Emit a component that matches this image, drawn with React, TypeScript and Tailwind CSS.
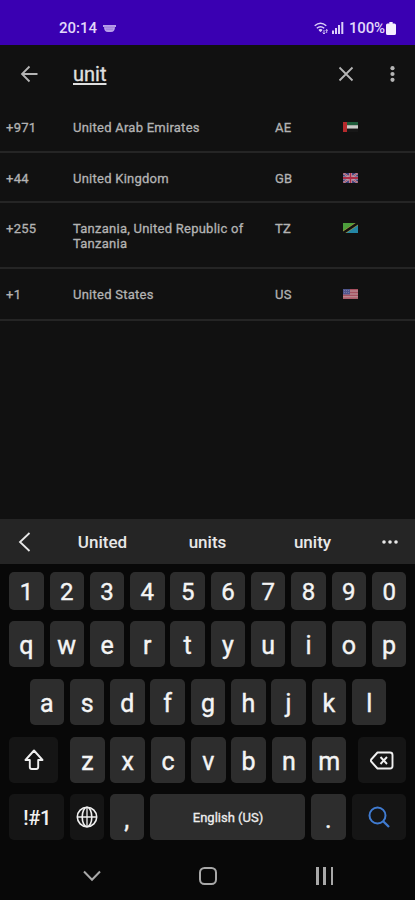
import React from "react";

type FlagCode = "AE" | "GB" | "TZ" | "US";

const countries: { dial: string; name: string; code: FlagCode; height: string }[] = [
  { dial: "+971", name: "United Arab Emirates", code: "AE", height: "h-[51px]" },
  { dial: "+44", name: "United Kingdom", code: "GB", height: "h-[50px]" },
  { dial: "+255", name: "Tanzania, United Republic of Tanzania", code: "TZ", height: "h-[66px]" },
  { dial: "+1", name: "United States", code: "US", height: "h-[52px]" },
];

function Flag({ code }: { code: FlagCode }) {
  return (
    <svg className="mt-[5px] h-[10px] w-[15px]" viewBox="0 0 15 10">
      {code === "AE" && (
        <>
          <rect width="15" height="3.4" fill="#1d5c3a" />
          <rect y="3.2" width="15" height="3.6" fill="#c9cbc8" />
          <rect y="6.7" width="15" height="3.3" fill="#171717" />
          <rect width="4" height="10" fill="#b52a2c" />
        </>
      )}
      {code === "GB" && (
        <>
          <rect width="15" height="10" fill="#3a3c78" />
          <path d="M0 0L15 10M15 0L0 10" stroke="#b9a9b5" strokeWidth="2" />
          <path d="M0 0L15 10M15 0L0 10" stroke="#a8324a" strokeWidth=".8" />
          <path d="M7.5 0V10M0 5H15" stroke="#c3b3be" strokeWidth="3.2" />
          <path d="M7.5 0V10M0 5H15" stroke="#ad2b45" strokeWidth="1.8" />
        </>
      )}
      {code === "TZ" && (
        <>
          <path d="M0 0H15L0 10Z" fill="#4c9e3c" />
          <path d="M15 0V10H0Z" fill="#2486a5" />
          <path d="M0 10L15 0" stroke="#a99b3c" strokeWidth="3.6" />
          <path d="M0 10L15 0" stroke="#111" strokeWidth="2.6" />
        </>
      )}
      {code === "US" && (
        <>
          <rect width="15" height="10" fill="#b9868e" />
          <path d="M0 .7H15M0 3.5H15M0 6.3H15M0 9.2H15" stroke="#a5505f" strokeWidth="1.3" />
          <rect width="7" height="5.5" fill="#50558c" />
          <path d="M1 1.5H6M1 3.5H6" stroke="#8f91b4" strokeWidth=".6" strokeDasharray="1 1" />
        </>
      )}
    </svg>
  );
}

function Key({ label, short = false }: { label: string; short?: boolean }) {
  const low = label === "," || label === ".";
  const size = short ? "h-[37.5px] pt-[3px] text-[24px]" : low ? "h-[46px] pt-[6px] text-[25px]" : "h-[46px] pt-[4px] text-[25px]";
  return (
    <div
      className={`flex w-[34.5px] shrink-0 items-center justify-center rounded-[5px] bg-[#2d2d2d] text-[#f4f4f4] [-webkit-text-stroke:0.4px] ${size}`}
    >
      {label}
    </div>
  );
}

function KeyRow({ keys, short = false }: { keys: string; short?: boolean }) {
  return (
    <div className="flex justify-center gap-[5.8px]">
      {keys.split("").map((k) => (
        <Key key={k} label={k} short={short} />
      ))}
    </div>
  );
}

const darkKey = "flex h-[46px] shrink-0 items-center justify-center rounded-[5px] bg-[#151515] text-[#f0f0f0]";

export default function App() {
  return (
    <div className="flex h-[900px] w-[415px] flex-col overflow-hidden bg-[#111111] font-['Roboto',sans-serif]">
      <div className="flex h-[45px] shrink-0 items-center bg-[#3a00b2] pt-[11px] pr-[19px] pl-[59px] text-[15px] font-medium text-[#e2d8fa]">
        <span className="w-[38px]">20:14</span>
        <svg className="ml-[6px] h-[7px] w-[13px]" viewBox="0 0 13 7">
          <path d="M0 0H13V2H12Q12 7 8 7H5Q1 7 1 2H0Z" fill="#b79fe9" />
          <path d="M1 2.2H12M3 4.2H10" stroke="#8b65d5" strokeWidth=".6" />
        </svg>
        <svg className="ml-auto h-[13px] w-[14px]" viewBox="0 0 14 13" fill="none" stroke="#dcd0f8">
          <path d="M.7 3.8Q6.5-1.3 12.3 3.8M2.8 6.3Q6.5 3 10.2 6.3M5 8.4Q6.5 7.2 8 8.4" strokeWidth="1.4" />
          <path d="M5 8L6.5 10L8 8Z" fill="#dcd0f8" strokeWidth=".5" />
          <path d="M10 8V12M8.7 10.6L10 12L11.2 10.6M12.7 11V7.5M11.7 8.7L12.7 7.5L13.7 8.7" strokeWidth=".9" />
        </svg>
        <svg className="ml-[4px] h-[12px] w-[12px]" viewBox="0 0 12 12" fill="#dcd0f8">
          <rect x="0" y="8.5" width="2" height="3.5" />
          <rect x="3" y="6" width="2" height="6" />
          <rect x="6" y="3" width="2" height="9" />
          <rect x="9.3" y="0" width="2" height="12" />
        </svg>
        <span className="ml-[5px] w-[37px] whitespace-nowrap tracking-[-0.2px]">100%</span>
        <svg className="h-[13px] w-[10px]" viewBox="0 0 9 13" preserveAspectRatio="none">
          <path d="M3 0H6V1.5H7.5Q9 1.5 9 3V11.5Q9 13 7.5 13H1.5Q0 13 0 11.5V3Q0 1.5 1.5 1.5H3Z" fill="#f4efff" />
        </svg>
      </div>

      <div className="flex h-[57px] shrink-0 items-center pl-[20px] text-[#b5b5b5]">
        <svg className="h-[18px] w-[18px]" viewBox="0 0 18 18" fill="none" stroke="currentColor" strokeWidth="1.8">
          <path d="M17.5 9H2M9.5 1.5L2 9L9.5 16.5" />
        </svg>
        <span className="ml-[35px] pt-px text-[20px] leading-6 text-[#e0e0e0] underline decoration-[1.5px] underline-offset-[2px] [-webkit-text-stroke:0.3px]">unit</span>
        <svg className="mr-[36px] ml-auto h-[16px] w-[16px]" viewBox="0 0 16 16" fill="none" stroke="currentColor" strokeWidth="1.8">
          <path d="M1.5 1.5L14.5 14.5M14.5 1.5L1.5 14.5" />
        </svg>
        <svg className="mr-[20px] h-[16px] w-[5px]" viewBox="0 0 5 16" fill="currentColor">
          <circle cx="2.5" cy="2.2" r="2.1" />
          <circle cx="2.5" cy="8" r="2.1" />
          <circle cx="2.5" cy="13.8" r="2.1" />
        </svg>
      </div>

      <div className="flex flex-col text-[13px] leading-[15px] tracking-[0.25px] text-[#b3b3b3] [-webkit-text-stroke:0.3px]">
        {countries.map((c) => (
          <div key={c.code} className={`flex shrink-0 items-start border-b-2 border-[#252525] pt-[18px] pl-[6px] ${c.height}`}>
            <span className="w-[67px] shrink-0">{c.dial}</span>
            <span className="w-[202px] shrink-0 pr-[20px]">{c.name}</span>
            <span className="w-[68px] shrink-0">{c.code}</span>
            <div className="-mt-[3px] flex">
              <Flag code={c.code} />
            </div>
          </div>
        ))}
      </div>

      <div className="mt-auto flex h-[381px] shrink-0 flex-col bg-[#080808]">
        <div className="flex h-[45px] shrink-0 items-center bg-[#252525] text-[17px] font-medium text-[#e8e8e8]">
          <svg className="ml-[18px] h-[20px] w-[13px]" viewBox="0 0 13 20" fill="none" stroke="currentColor" strokeWidth="1.8">
            <path d="M11.5 1L2 10L11.5 19" />
          </svg>
          <span className="ml-[19px] w-[105px] pt-[2px] text-center">United</span>
          <span className="w-[105px] pt-[2px] text-center">units</span>
          <span className="w-[105px] pt-[2px] text-center">unity</span>
          <svg className="ml-[17px] h-[4px] w-[16px]" viewBox="0 0 16 4" fill="currentColor">
            <circle cx="2" cy="2" r="1.8" />
            <circle cx="8" cy="2" r="1.8" />
            <circle cx="14" cy="2" r="1.8" />
          </svg>
        </div>

        <div className="flex w-[415px] shrink-0 flex-col pt-[8px]">
          <div className="pl-[0.6px]">
            <KeyRow keys="1234567890" short />
          </div>
          <div className="mt-[11.5px] pl-[0.6px]">
            <KeyRow keys="qwertyuiop" />
          </div>
          <div className="mt-[12px] pl-px">
            <KeyRow keys="asdfghjkl" />
          </div>
          <div className="mt-[12px] flex justify-between pr-[8.7px] pl-[9.3px]">
            <div className={`${darkKey} w-[49px]`}>
              <svg className="h-[22px] w-[20px]" viewBox="0 0 20 22" fill="none" stroke="currentColor" strokeWidth="1.9" strokeLinejoin="round">
                <path d="M10 1.5L1.5 11H5.8V18Q5.8 20 7.8 20H12.2Q14.2 20 14.2 18V11H18.5Z" />
              </svg>
            </div>
            <KeyRow keys="zxcvbnm" />
            <div className={`${darkKey} w-[48px]`}>
              <svg className="h-[19px] w-[24px]" viewBox="0 0 24 19" fill="none" stroke="currentColor" strokeWidth="1.9" strokeLinejoin="round">
                <path d="M7.5 1.5H20Q22.5 1.5 22.5 4V15Q22.5 17.5 20 17.5H7.5L1.2 10.5Q.5 9.5 1.2 8.5Z" />
                <path d="M10.5 6L17 13M17 6L10.5 13" />
              </svg>
            </div>
          </div>
          <div className="mt-[11px] flex justify-center gap-[6px]">
            <div className={`${darkKey} w-[54.5px] pt-[2px] pl-[2px] text-[20px] font-medium tracking-[-0.3px]`}>!#1</div>
            <div className={`${darkKey} w-[34px]`}>
              <svg className="h-[22px] w-[22px]" viewBox="0 0 22 22" fill="none" stroke="currentColor" strokeWidth="1.6">
                <circle cx="11" cy="11" r="9.7" />
                <ellipse cx="11" cy="11" rx="4.8" ry="9.7" />
                <path d="M11 1.3V20.7M1.3 11H20.7" strokeWidth="1.3" />
              </svg>
            </div>
            <Key label="," />
            <div className="flex h-[46px] w-[155px] shrink-0 items-center justify-center rounded-[5px] bg-[#2d2d2d] pt-[2px] pl-px text-[13px] text-[#eeeeee] [-webkit-text-stroke:0.3px]">
              English (US)
            </div>
            <Key label="." />
            <div className={`${darkKey} w-[54.5px]`}>
              <svg className="h-[22px] w-[22px]" viewBox="0 0 22 22" fill="none" stroke="#407bd0" strokeWidth="2">
                <circle cx="9.5" cy="9.5" r="8" />
                <path d="M15.2 15.2L21 21" strokeWidth="2.3" />
              </svg>
            </div>
          </div>
        </div>

        <div className="flex h-[60px] items-center pt-[11px] pl-[83px] text-[#a8a8a8]">
          <svg className="h-[12px] w-[18px]" viewBox="0 0 18 12" fill="none" stroke="currentColor" strokeWidth="2">
            <path d="M1 1.5L9 9.8L17 1.5" />
          </svg>
          <div className="ml-[98px] h-[18px] w-[18px] rounded-[5.5px] border-2 border-current" />
          <div className="ml-[99px] flex h-[18px] w-[17px] justify-between">
            <div className="w-[2.5px] bg-current" />
            <div className="w-[2.5px] bg-current" />
            <div className="w-[2.5px] bg-current" />
          </div>
        </div>
      </div>
    </div>
  );
}
